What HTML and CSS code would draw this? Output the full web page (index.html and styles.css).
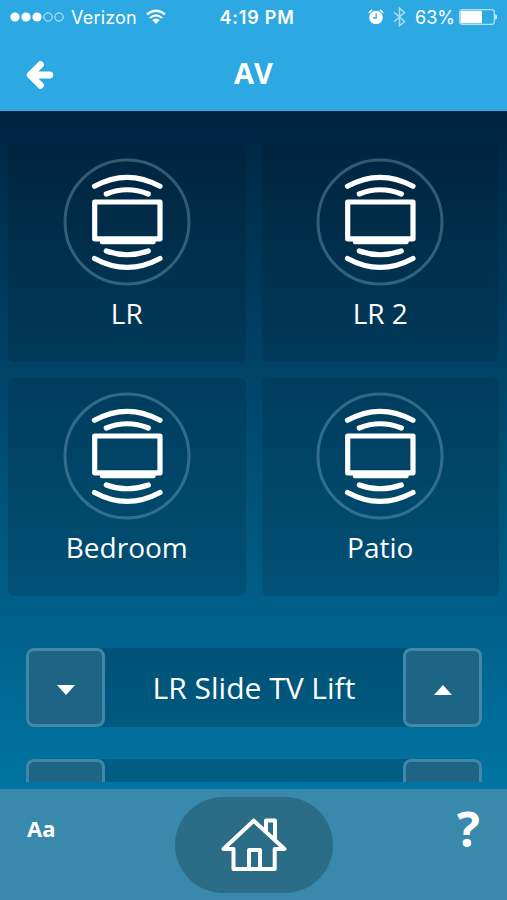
FILE: index.html
```html
<!DOCTYPE html>
<html lang="en">

<head>
    <meta charset="UTF-8">
    <meta name="viewport" content="width=device-width, initial-scale=1.0">
    <title>AV</title>
    <link rel="stylesheet" href="styles.css">
</head>

<body>
    <!-- TV icon shared by all room tiles -->
    <svg class="sprite">
        <symbol id="tv" viewBox="0 0 128 128">
            <circle cx="64" cy="64" r="62" fill="none" stroke="#8ab8cc" stroke-opacity="0.36" stroke-width="3" />
            <g fill="none" stroke="#fff" stroke-width="5.2" stroke-linecap="round" stroke-linejoin="round">
                <path d="M31.500 28.300 Q64 10.300 97 28.300" />
                <path d="M43.300 36 Q64 27.500 85.300 36" />
                <rect x="31.700" y="44" width="65.300" height="36.800" />
                <path d="M39 84 H90.500" stroke-width="4.500" />
                <path d="M43.300 93 Q64 100.500 85.300 93" />
                <path d="M31.500 100.500 Q64 118.300 97 100.500" />
            </g>
        </symbol>
    </svg>

    <div class="app">
        <header class="header">
            <div class="status-bar">
                <div class="status-left">
                    <svg class="signal" width="54" height="12" viewBox="0 0 54 12">
                        <g fill="#fff">
                            <circle cx="5" cy="6" r="4.600" />
                            <circle cx="16" cy="6" r="4.600" />
                            <circle cx="27" cy="6" r="4.600" />
                        </g>
                        <g fill="none" stroke="#fff" stroke-opacity="0.8">
                            <circle cx="38" cy="6" r="4.200" />
                            <circle cx="49" cy="6" r="4.200" />
                        </g>
                    </svg>
                    <span class="carrier">Verizon</span>
                    <svg class="wifi" width="20" height="16" viewBox="0 0 20 16">
                        <path d="M1 5.500 Q10 -2 19 5.500 M4 9 Q10 3.700 16 9" fill="none" stroke="#fff" stroke-width="2.200" />
                        <path d="M6.200 11 Q10 7.800 13.800 11 L10 15 Z" fill="#fff" />
                    </svg>
                </div>
                <div class="time">4:19 PM</div>
                <div class="status-right">
                    <svg class="alarm" width="16" height="16" viewBox="0 0 16 16">
                        <circle cx="8" cy="8.500" r="6.800" fill="#fff" />
                        <path d="M1.200 3.500 L3.500 1.300 M12.500 1.300 L14.800 3.500" stroke="#fff" stroke-width="1.600" stroke-linecap="round" />
                        <path d="M8.200 4.500 V9 H5" fill="none" stroke="#2ca9e2" stroke-width="1.300" />
                    </svg>
                    <svg class="bluetooth" width="13" height="20" viewBox="0 0 13 20">
                        <path d="M1 5.300 L11.500 14.500 L6.500 18.800 V1.200 L11.500 5.500 L1 14.700" fill="none" stroke="#fff" stroke-width="1.500" />
                    </svg>
                    <span class="percent">63%</span>
                    <svg class="battery" width="39" height="16" viewBox="0 0 39 16">
                        <rect x="0.700" y="0.700" width="34.600" height="14.600" rx="2.500" fill="none" stroke="#fff" stroke-opacity="0.65" stroke-width="1.200" />
                        <rect x="1.500" y="1.800" width="21.500" height="12.400" rx="1" fill="#fff" />
                        <path d="M36.300 5 Q40 8 36.300 11 Z" fill="#fff" />
                    </svg>
                </div>
            </div>
            <div class="nav-bar">
                <a href="#" class="back" aria-label="Back">
                    <svg width="28" height="28" viewBox="0 0 28 28">
                        <path d="M14.500 3.700 L4.200 14 L14.500 24.300 M5 14 H23.800" fill="none" stroke="#fff" stroke-width="6.800" stroke-linecap="round" stroke-linejoin="round" />
                    </svg>
                </a>
                <h1>AV</h1>
            </div>
        </header>

        <main class="content">
            <div class="rooms">
                <a href="#" class="room">
                    <svg class="room-icon"><use href="#tv" /></svg>
                    <span>LR</span>
                </a>
                <a href="#" class="room">
                    <svg class="room-icon"><use href="#tv" /></svg>
                    <span>LR 2</span>
                </a>
                <a href="#" class="room">
                    <svg class="room-icon"><use href="#tv" /></svg>
                    <span>Bedroom</span>
                </a>
                <a href="#" class="room">
                    <svg class="room-icon"><use href="#tv" /></svg>
                    <span>Patio</span>
                </a>
            </div>

            <div class="lifts">
                <div class="lift">
                    <button class="lift-button" aria-label="Down">
                        <svg width="20" height="12" viewBox="0 0 20 12"><path d="M1 1 H19 L10 11 Z" /></svg>
                    </button>
                    <span class="lift-name">LR Slide TV Lift</span>
                    <button class="lift-button" aria-label="Up">
                        <svg width="20" height="12" viewBox="0 0 20 12"><path d="M1 11 H19 L10 1 Z" /></svg>
                    </button>
                </div>
                <!-- next row is cut off by the scroll area -->
                <div class="lift">
                    <button class="lift-button" aria-label="Down"></button>
                    <span class="lift-name"></span>
                    <button class="lift-button" aria-label="Up"></button>
                </div>
            </div>
        </main>

        <footer class="footer">
            <a href="#" class="text-size">Aa</a>
            <a href="#" class="home" aria-label="Home">
                <svg width="66" height="56" viewBox="0 0 66 56">
                    <g fill="none" stroke="#fff" stroke-width="4" stroke-linejoin="round">
                        <path d="M2.500 32 L32.700 3.700 L63.500 32 H53.700 V52 H12.500 V32 Z" />
                        <path d="M45 14.500 V3.500 H54 V23" />
                        <path d="M28 52 V33 H39 V52" />
                    </g>
                </svg>
            </a>
            <a href="#" class="help">?</a>
        </footer>
    </div>
</body>

</html>
```

FILE: styles.css
```css
* {
    box-sizing: border-box;
}

body,
html {
    height: 100%;
    margin: 0;
    font-family: "Open Sans", "Noto Sans", sans-serif;
    color: #fff;
}

a {
    color: #fff;
    text-decoration: none;
}

svg {
    display: block;
}

.sprite {
    display: none;
}

.app {
    display: flex;
    flex-direction: column;
    height: 900px;
    overflow: hidden;
    /* Dark navy fading to blue behind the tiles */
    background: linear-gradient(#002442 111px, #00304f 210px, #004266 360px, #005e88 600px, #0074a3 789px);
}

/* Header */
.header {
    height: 111px;
    background-color: #2ca9e2;
}

.status-bar {
    display: grid;
    grid-template-columns: 1fr auto 1fr;
    align-items: center;
    height: 34px;
    padding: 0 9px 0 10px;
    font-family: Inter, "Liberation Sans", sans-serif;
    font-size: 18px;
}

.status-left,
.status-right {
    display: flex;
    align-items: center;
}

.status-right {
    justify-content: flex-end;
}

.carrier {
    margin: 0 9px 0 7px;
    letter-spacing: 0.2px;
}

.time {
    margin-left: 6px;
    font-weight: 600;
    letter-spacing: 0.8px;
}

.bluetooth {
    margin: 0 9px 0 9px;
    opacity: 0.6;
}

.percent {
    margin-right: 4px;
}

.nav-bar {
    display: grid;
    grid-template-columns: 1fr auto 1fr;
    align-items: center;
    height: 77px;
    padding: 0 26px;
}

.back {
    padding-top: 4px;
}

.nav-bar h1 {
    margin: 0;
    font-size: 29px;
    font-weight: 700;
}

/* Room tiles */
.content {
    height: 671px;
    overflow: hidden;
    padding: 33px 8px 0;
}

.rooms {
    display: grid;
    grid-template-columns: 1fr 1fr;
    gap: 16px;
}

.room {
    display: flex;
    flex-direction: column;
    align-items: center;
    height: 218px;
    padding-top: 14px;
    border-radius: 6px;
    background-color: rgba(0, 20, 30, 0.16);
    font-size: 28px;
    line-height: 38px;
}

.room-icon {
    width: 128px;
    height: 128px;
    margin-bottom: 8px;
}

/* Lift controls */
.lifts {
    display: flex;
    flex-direction: column;
    gap: 32px;
    padding: 52px 17px 0 18px;
}

.lift {
    display: flex;
    flex-shrink: 0;
    height: 79px;
    border-radius: 8px;
    background-color: rgba(0, 30, 40, 0.24);
}

.lift-name {
    flex: 1;
    text-align: center;
    font-size: 30px;
    line-height: 79px;
}

.lift-button {
    display: flex;
    align-items: center;
    justify-content: center;
    width: 79px;
    padding: 5px 0 0;
    border: 3px solid #4088a6;
    border-radius: 8px;
    background-color: #1e6585;
    fill: #fff;
}

/* Footer */
.footer {
    display: grid;
    grid-template-columns: 1fr auto 1fr;
    height: 111px;
    margin-top: auto;
    padding: 8px 27px 7px;
    background-color: #3889ac;
    font-weight: 700;
}

.text-size {
    padding-top: 16px;
    font-size: 22px;
}

.home {
    display: flex;
    align-items: center;
    justify-content: center;
    width: 158px;
    border-radius: 48px;
    background-color: #2b6d86;
}

.help {
    justify-self: end;
    font-size: 48px;
    line-height: 64px;
}
```
